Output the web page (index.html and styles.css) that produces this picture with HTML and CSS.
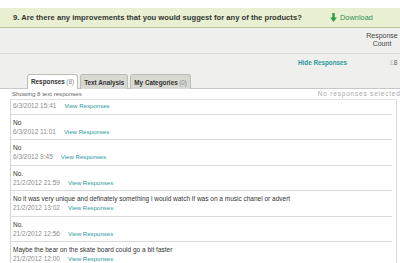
FILE: index.html
```html
<!DOCTYPE html>
<html>
<head>
  <title>Question 9 - Text Responses</title>
  <link rel="stylesheet" href="styles.css">
</head>
<body>
  <div class="question">
    <div class="q-head">
      <span class="q-title">9. Are there any improvements that you would suggest for any of the products?</span>
      <a class="download" href="#">
        <svg width="7" height="9" viewBox="0 0 7 9"><path d="M2.3 0h2.4v4.5H7L3.5 9 0 4.5h2.3z" fill="#2f9a4a"/></svg>
        Download
      </a>
    </div>

    <div class="summary">
      <div class="count-head">
        <span class="count-label">Response<br>Count</span>
      </div>
      <div class="hide-row">
        <a class="hide-link" href="#">Hide Responses</a>
        <span class="count-val"><span class="count-pre">£</span>8</span>
      </div>
      <div class="tabs">
        <div class="tab active"><b>Responses</b> <span class="num">(8)</span></div>
        <div class="tab"><b>Text Analysis</b></div>
        <div class="tab"><b>My Categories</b> <span class="num">(0)</span></div>
      </div>
    </div>

    <div class="panel">
      <div class="panel-info">
        <span>Showing 8 text responses</span>
        <span class="selected">No responses selected</span>
      </div>
      <div class="list">
        <div class="list-inner">
          <div class="row"><div class="txt">No</div><div class="meta"><span class="date">6/3/2012 15:41</span><a href="#">View Responses</a></div></div>
          <div class="row"><div class="txt">No</div><div class="meta"><span class="date">6/3/2012 11:01</span><a href="#">View Responses</a></div></div>
          <div class="row"><div class="txt">No</div><div class="meta"><span class="date">6/3/2012 9:45</span><a href="#">View Responses</a></div></div>
          <div class="row"><div class="txt">No.</div><div class="meta"><span class="date">21/2/2012 21:59</span><a href="#">View Responses</a></div></div>
          <div class="row"><div class="txt">No it was very unique and definately something i would watch if was on a music chanel or advert</div><div class="meta"><span class="date">21/2/2012 13:02</span><a href="#">View Responses</a></div></div>
          <div class="row"><div class="txt">No.</div><div class="meta"><span class="date">21/2/2012 12:56</span><a href="#">View Responses</a></div></div>
          <div class="row"><div class="txt">Maybe the bear on the skate board could go a bit faster</div><div class="meta"><span class="date">21/2/2012 12:00</span><a href="#">View Responses</a></div></div>
        </div>
      </div>
    </div>
  </div>
</body>
</html>
```

FILE: styles.css
```css
body {
  margin: 0;
  background-color: white;
  font-family: "Liberation Sans", Arial, sans-serif;
  color: #333;
  overflow: hidden;
}

a {
  color: #2a9a9a;
  text-decoration: none;
}

.question {
  padding-top: 8px;
  width: 400px;
}

.q-head {
  display: flex;
  align-items: center;
  justify-content: space-between;
  height: 19px;
  padding-left: 13px;
  background-color: #e9f0d2;
  border-bottom: 1px solid #b9c49a;
}

.q-title {
  font-size: 7.65px;
  font-weight: bold;
  color: #333;
}

.download {
  display: flex;
  align-items: center;
  gap: 3px;
  width: 70px;
  font-size: 7.4px;
  color: #2f8f55;
}

.summary {
  background-color: #efefee;
}

.count-head {
  display: flex;
  justify-content: flex-end;
  height: 25px;
  border-bottom: 1px solid #dcdcdc;
}

.count-label {
  width: 40px;
  margin-right: -2px;
  padding-top: 4px;
  font-size: 7px;
  line-height: 8px;
  text-align: center;
  color: #444;
}

.hide-row {
  display: flex;
  align-items: center;
  height: 16px;
  padding-left: 298px;
}

.hide-link {
  font-size: 6.3px;
  font-weight: bold;
}

.count-val {
  margin-left: 43px;
  font-size: 6.5px;
  color: #666;
}

.count-pre {
  color: #bbb;
}

.tabs {
  display: flex;
  gap: 2px;
  height: 14px;
  padding: 4px 0 0 27px;
  border-bottom: 1px solid #c8c8c8;
}

.tab {
  display: flex;
  align-items: center;
  gap: 1.5px;
  padding: 0 3px;
  margin-bottom: -1px;
  background-color: #d9d9d4;
  border: 1px solid #bdbdb8;
  border-bottom: none;
  border-radius: 3px 3px 0 0;
  font-size: 6.35px;
  color: #333;
}

.tab.active {
  background-color: white;
  padding-bottom: 1px;
}

.tab .num {
  color: #888;
}

.panel {
  padding-left: 10px;
}

.panel-info {
  display: flex;
  align-items: baseline;
  height: 9px;
  padding: 1px 0 0 2px;
  font-size: 6.1px;
  line-height: 8px;
  color: #666;
  white-space: nowrap;
}

.selected {
  margin-left: 236px;
  font-size: 6.5px;
  letter-spacing: 0.8px;
  color: #a8a8a8;
}

.list {
  height: 170px;
  overflow: hidden;
  border-left: 1px solid #d6d6d6;
  border-top: 1px solid #e2e2e2;
  margin-right: 3px;
  border-right: 1px solid #dcdcdc;
}

.list-inner {
  margin-top: -11px;
  padding-right: 4px;
}

.row {
  padding: 3px 0 3.5px 2px;
  border-bottom: 1px solid #dadada;
  line-height: 9px;
  font-size: 6.5px;
}

.txt {
  color: #333;
  white-space: nowrap;
}

.meta {
  display: flex;
  gap: 8px;
}

.meta a {
  font-size: 6.1px;
}

.date {
  color: #8c8c8c;
}
```
